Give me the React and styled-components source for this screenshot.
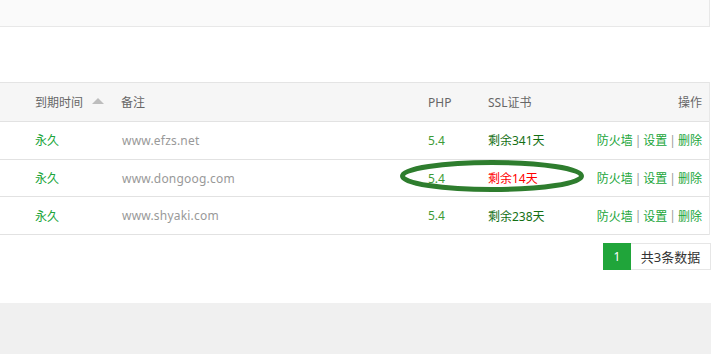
import React from 'react';
import styled, { createGlobalStyle } from 'styled-components';

const GlobalStyle = createGlobalStyle`
  html, body {
    margin: 0;
    padding: 0;
    background: #fff;
  }
  body {
    font-family: "Microsoft YaHei", "Noto Sans", "Noto Sans CJK SC", sans-serif;
    font-size: 12px;
    color: #666;
  }
`;

const Page = styled.div`
  width: 711px;
  height: 354px;
  display: flex;
  flex-direction: column;
  overflow: hidden;
`;

const TopBar = styled.div`
  width: 709px;
  height: 26px;
  background: #fafafa;
  border-bottom: 1px solid #e8e8e8;
  border-right: 1px solid #e8e8e8;
`;

const Content = styled.div`
  position: relative;
  padding-top: 55px;
  background: #fff;
`;

const Table = styled.div`
  width: 709px;
  border-right: 1px solid #e8e8e8;
  border-top: 1px solid #e4e4e4;
`;

const Row = styled.div`
  display: grid;
  grid-template-columns: 86px 307px 60px 1fr auto;
  align-items: center;
  height: ${p => (p.$head ? '38px' : '36.7px')};
  padding: 0 7px 0 35px;
  background: ${p => (p.$head ? '#f6f6f6' : '#fff')};
  border-bottom: 1px solid #e2e2e2;
  color: ${p => (p.$head ? '#666' : '#999')};
`;

const HeadCell = styled.div`
  display: flex;
  align-items: center;
  justify-content: ${p => (p.$right ? 'flex-end' : 'flex-start')};
  gap: 9px;
`;

const SortArrow = styled.span`
  width: 0;
  height: 0;
  border-left: 6px solid transparent;
  border-right: 6px solid transparent;
  border-bottom: 6px solid #bdbdbd;
  margin-top: -2px;
`;

const Forever = styled.span`
  color: #20a53a;
`;

const Domain = styled.span`
  color: #999;
  padding-left: 1px;
  letter-spacing: 0.2px;
`;

const Php = styled.span`
  color: #3e9b36;
`;

const Ssl = styled.span`
  color: ${p => (p.$warn ? '#ff0000' : '#136f13')};
`;

const Ops = styled.div`
  display: flex;
  justify-content: flex-end;
  align-items: center;
`;

const OpLink = styled.a`
  color: #20a53a;
  text-decoration: none;
  cursor: pointer;
`;

const Sep = styled.span`
  color: #999;
  margin: 0 2px;
`;

const Pager = styled.div`
  display: flex;
  justify-content: flex-end;
  margin-top: 8px;
  height: 27px;
`;

const PageNum = styled.span`
  width: 28px;
  display: flex;
  align-items: center;
  justify-content: center;
  background: #20a53a;
  color: #fff;
`;

const PageInfo = styled.span`
  width: 79px;
  display: flex;
  align-items: center;
  justify-content: center;
  border: 1px solid #e6e6e6;
  border-left: none;
  color: #333;
  font-size: 13px;
`;

const Mark = styled.svg`
  position: absolute;
  left: 398px;
  top: 131px;
  pointer-events: none;
`;

const Footer = styled.div`
  flex: 1;
  margin-top: 33px;
  background: #f0f0f0;
`;

const sites = [
  { note: 'www.efzs.net', php: '5.4', ssl: '剩余341天' },
  { note: 'www.dongoog.com', php: '5.4', ssl: '剩余14天', warn: true },
  { note: 'www.shyaki.com', php: '5.4', ssl: '剩余238天' },
];

export default function App() {
  return (
    <Page>
      <GlobalStyle />
      <TopBar />
      <Content>
        <Table>
          <Row $head>
            <HeadCell>到期时间<SortArrow /></HeadCell>
            <HeadCell>备注</HeadCell>
            <HeadCell>PHP</HeadCell>
            <HeadCell>SSL证书</HeadCell>
            <HeadCell $right>操作</HeadCell>
          </Row>
          {sites.map(s => (
            <Row key={s.note}>
              <Forever>永久</Forever>
              <Domain>{s.note}</Domain>
              <Php>{s.php}</Php>
              <Ssl $warn={s.warn}>{s.ssl}</Ssl>
              <Ops>
                <OpLink>防火墙</OpLink>
                <Sep>|</Sep>
                <OpLink>设置</OpLink>
                <Sep>|</Sep>
                <OpLink>删除</OpLink>
              </Ops>
            </Row>
          ))}
        </Table>
        <Pager>
          <PageNum>1</PageNum>
          <PageInfo>共3条数据</PageInfo>
        </Pager>
        <Mark width="190" height="36" viewBox="0 0 190 36">
          <ellipse cx="94" cy="18" rx="89.5" ry="13.5" fill="none" stroke="#2e7d2e" strokeWidth="5" />
        </Mark>
      </Content>
      <Footer />
    </Page>
  );
}
